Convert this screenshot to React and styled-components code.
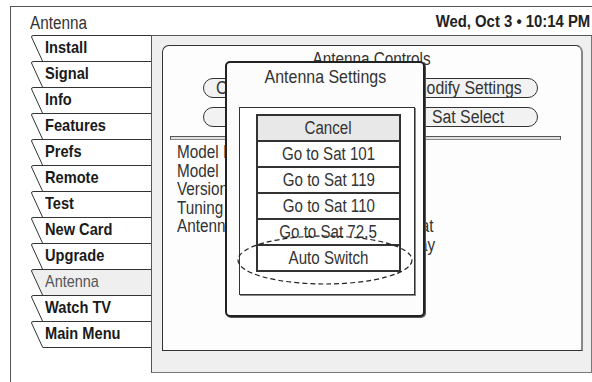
import React from 'react';
import styled, { createGlobalStyle } from 'styled-components';

const GlobalStyle = createGlobalStyle`
  html, body {
    margin: 0;
    padding: 0;
    background: #ffffff;
  }
  body {
    font-family: "Liberation Sans Narrow", "Liberation Sans", Arial, sans-serif;
    color: #333333;
  }
`;

// the set uses a condensed Helvetica; squeeze Liberation Sans to match its widths
const Narrow = styled.span`
  display: inline-block;
  white-space: nowrap;
  transform: scaleX(${p => p.$scale || 0.85});
  transform-origin: ${p => p.$origin || 'left'} center;
`;

const Screen = styled.div`
  position: relative;
  width: 592px;
  height: 382px;
  overflow: hidden;
  padding-top: 6px;
  box-sizing: border-box;
`;

const Frame = styled.div`
  margin-left: 10px;
  height: 376px;
  border-top: 1px solid #555;
  border-left: 1px solid #555;
  display: flex;
  flex-direction: column;
`;

const Header = styled.div`
  height: 28px;
  display: flex;
  justify-content: space-between;
  align-items: flex-start;
  padding: 0 2px 0 19px;
`;

const ScreenTitle = styled.div`
  margin-top: 6px;
  font-size: 18px;
  line-height: 20px;
  color: #333;
`;

const Clock = styled.div`
  margin-top: 6px;
  font-size: 16px;
  line-height: 18px;
  font-weight: bold;
  color: #222;
`;

const Body = styled.div`
  display: flex;
  align-items: flex-start;
  padding-left: 19px;
`;

const TabColumn = styled.div`
  width: 122px;
  margin-right: -1px;
  position: relative;
  z-index: 1;
  display: flex;
  flex-direction: column;
`;

const TabItem = styled.div`
  position: relative;
  height: 26px;
  display: flex;
  align-items: center;
  padding-left: 15px;
  box-sizing: border-box;
  font-size: 17px;
  font-weight: ${p => (p.$active ? 'normal' : 'bold')};
  color: ${p => (p.$active ? '#555' : '#1a1a1a')};
  border-right: 1px solid ${p => (p.$active ? 'transparent' : '#555')};
`;

const TabShape = styled.svg`
  position: absolute;
  left: 0;
  top: 0;
  width: 121px;
  height: 27px;
  overflow: visible;
`;

const Panel = styled.div`
  width: 441px;
  height: 338px;
  box-sizing: border-box;
  background: #efefef;
  border: 1px solid #555;
  border-right-color: #777;
  border-bottom-color: #777;
  padding: 9px 8px 0 10px;
`;

const Sheet = styled.div`
  position: relative;
  height: 306px;
  box-sizing: border-box;
  background: #fdfdfd;
  border: 1px solid #333;
  border-right: 2px solid #888;
  border-radius: 7px 7px 0 0;
  padding-top: 4px;
  display: flex;
  flex-direction: column;
`;

const SheetTitle = styled.div`
  text-align: center;
  font-size: 18px;
  line-height: 19px;
`;

const PillGrid = styled.div`
  margin: 9px 0 0 40px;
  display: grid;
  grid-template-columns: 140px 140px;
  column-gap: 55px;
  row-gap: 9px;
`;

const Pill = styled.div`
  height: 20px;
  box-sizing: border-box;
  border: 1px solid #333;
  border-radius: 10px;
  background: #f2f2f2;
  display: flex;
  align-items: center;
  justify-content: ${p => (p.$lead ? 'flex-start' : 'center')};
  padding-left: ${p => (p.$lead ? '12px' : '0')};
  font-size: 18px;
`;

const Divider = styled.div`
  margin: 9px 20px 0 7px;
  height: 4px;
  box-sizing: border-box;
  border: 1px solid #555;
  border-bottom-color: #888;
  background: #e0e0e0;
`;

const InfoGrid = styled.div`
  margin-top: 3px;
  padding-left: 14px;
  display: grid;
  grid-template-columns: 208px 1fr;
  font-size: 18px;
  line-height: 18.6px;
`;

const Dialog = styled.div`
  position: absolute;
  left: 62px;
  top: 15px;
  width: 200px;
  height: 256px;
  box-sizing: border-box;
  background: #fcfcfc;
  border: 2px solid #222;
  border-radius: 5px;
  box-shadow: 1px 1px 0 #555;
  display: flex;
  flex-direction: column;
  align-items: flex-start;
`;

const DialogTitle = styled.div`
  align-self: stretch;
  text-align: center;
  margin-top: 3px;
  font-size: 19px;
  line-height: 22px;
`;

const ChoiceBox = styled.div`
  margin: 19px 0 0 12px;
  width: 176px;
  height: 188px;
  box-sizing: border-box;
  border: 1px solid #333;
  box-shadow: 1px 1px 0 #888;
  background: #fff;
  padding: 6px 0 0 16px;
`;

const Choice = styled.div`
  width: 145px;
  height: 28px;
  box-sizing: border-box;
  margin-top: ${p => (p.$first ? '0' : '-2px')};
  border: 2px solid #333;
  background: ${p => (p.$selected ? '#e8e8e8' : '#fff')};
  display: flex;
  align-items: center;
  justify-content: center;
  font-size: 18px;
  color: #333;
`;

const Highlight = styled.svg`
  position: absolute;
  left: 0;
  top: 0;
  width: 200px;
  height: 256px;
  overflow: visible;
  pointer-events: none;
`;

const tabs = ['Install', 'Signal', 'Info', 'Features', 'Prefs', 'Remote', 'Test', 'New Card', 'Upgrade', 'Antenna', 'Watch TV', 'Main Menu'];
const choices = ['Cancel', 'Go to Sat 101', 'Go to Sat 119', 'Go to Sat 110', 'Go to Sat 72.5', 'Auto Switch'];
const pills = ['Check Switch', 'Modify Settings', 'Test Switch', 'Sat Select'];
const info = [
  ['Model ID', ''],
  ['Model', ''],
  ['Version', ''],
  ['Tuning', ''],
  ['Antenna', 'Format'],
  ['', 'Display'],
];

function Tab({ label, active, last }) {
  return (
    <TabItem $active={active}>
      <TabShape viewBox="0 0 121 27">
        {active && <polygon points="1,1 121,1 121,26 13,26" fill="#efefef" />}
        <path d="M121 0.5 H4 Q1 0.5 1.5 2 L12.5 26" fill="none" stroke="#333" strokeWidth="1" />
        {last && <path d="M12.5 26.5 H121" stroke="#333" strokeWidth="1" />}
      </TabShape>
      <Narrow $scale={active ? 0.85 : 0.86}>{label}</Narrow>
    </TabItem>
  );
}

export default function App() {
  return (
    <Screen>
      <GlobalStyle />
      <Frame>
        <Header>
          <ScreenTitle><Narrow>Antenna</Narrow></ScreenTitle>
          <Clock><Narrow $scale={0.93} $origin="right">Wed, Oct 3 &bull; 10:14 PM</Narrow></Clock>
        </Header>
        <Body>
          <TabColumn>
            {tabs.map((t, i) => (
              <Tab key={t + i} label={t} active={i === 9} last={i === tabs.length - 1} />
            ))}
          </TabColumn>
          <Panel>
            <Sheet>
              <SheetTitle><Narrow $origin="center">Antenna Controls</Narrow></SheetTitle>
              <PillGrid>
                {pills.map((p, i) => (
                  <Pill key={p} $lead={i === 0}>
                    <Narrow $scale={0.88} $origin={i === 0 ? 'left' : 'center'}>{p}</Narrow>
                  </Pill>
                ))}
              </PillGrid>
              <Divider />
              <InfoGrid>
                {info.map(([label, value], i) => (
                  <React.Fragment key={i}>
                    <div><Narrow>{label || '\u00a0'}</Narrow></div>
                    <div><Narrow>{value}</Narrow></div>
                  </React.Fragment>
                ))}
              </InfoGrid>
              <Dialog>
                <DialogTitle><Narrow $scale={0.84} $origin="center">Antenna Settings</Narrow></DialogTitle>
                <ChoiceBox>
                  {choices.map((c, i) => (
                    <Choice key={c} $first={i === 0} $selected={i === 0}>
                      <Narrow $scale={0.84} $origin="center">{c}</Narrow>
                    </Choice>
                  ))}
                </ChoiceBox>
                <Highlight viewBox="0 0 200 256">
                  <ellipse cx="98" cy="197" rx="87" ry="24" fill="none" stroke="#222" strokeWidth="1.2" strokeDasharray="5 3" />
                </Highlight>
              </Dialog>
            </Sheet>
          </Panel>
        </Body>
      </Frame>
    </Screen>
  );
}
